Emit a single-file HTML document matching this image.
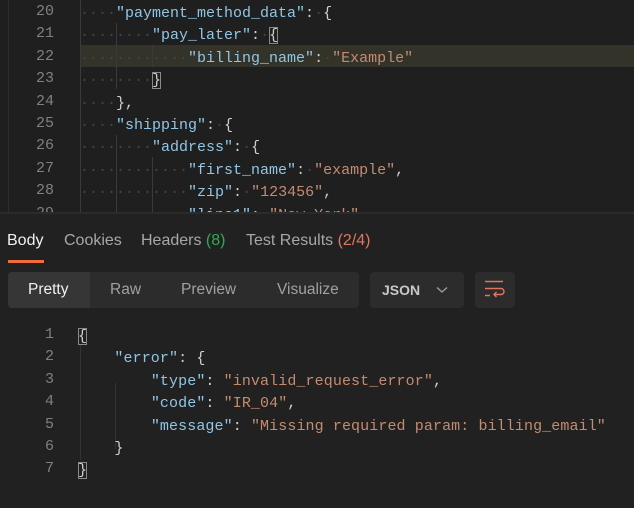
<!DOCTYPE html>
<html><head><meta charset="utf-8"><style>
*{margin:0;padding:0;box-sizing:border-box}
body{width:634px;height:508px;background:#212121;overflow:hidden;font-family:"Liberation Sans",sans-serif;position:relative}
.ln{position:absolute;left:0;width:54px;text-align:right;color:#808080;font:15px "Liberation Mono",monospace}
.cl{position:absolute;white-space:pre;font:15px "Liberation Mono",monospace;color:#d4d4d4}
.d{color:#444}
.k{color:#8fc6e6}
.s{color:#c58b70}
.p{color:#cfcfcf}
.b{outline:1px solid #8a8a8a;outline-offset:-1px}
.vl{position:absolute;width:1px;background:#3a3a3a}
.t{position:absolute;top:232px;font-size:16px;color:#a8a8a8;white-space:nowrap}
</style></head><body>
<div style="position:absolute;left:0;top:0;width:634px;height:214px;background:#1f1f1f"></div>
<div style="position:absolute;left:8px;top:0;width:1px;height:213px;background:#2e2e2e"></div>
<div style="position:absolute;left:80px;top:45px;width:554px;height:22px;background:#33332a"></div>
<div class="vl" style="left:80px;top:0;height:213px"></div>
<div class="vl" style="left:116px;top:23px;height:66px"></div>
<div class="vl" style="left:116px;top:135px;height:78px"></div>
<div class="vl" style="left:152px;top:45px;height:22px"></div>
<div class="vl" style="left:152px;top:157px;height:56px"></div>

<div style="position:absolute;top:3px;left:0">
<div class="ln" style="top:0">20</div>
<div class="ln" style="top:22.4px">21</div>
<div class="ln" style="top:44.8px">22</div>
<div class="ln" style="top:67.2px">23</div>
<div class="ln" style="top:89.6px">24</div>
<div class="ln" style="top:112px">25</div>
<div class="ln" style="top:134.4px">26</div>
<div class="ln" style="top:156.8px">27</div>
<div class="ln" style="top:179.2px">28</div>
<div class="ln" style="top:201.6px">29</div>
</div>
<div class="cl" style="left:80px;top:3px;line-height:22.4px"><span class="d">····</span><span class="k">"payment_method_data"</span><span class="p">:</span><span class="d">·</span><span class="p">{</span>
<span class="d">········</span><span class="k">"pay_later"</span><span class="p">:</span><span class="d">·</span><span class="p b">{</span>
<span class="d">············</span><span class="k">"billing_name"</span><span class="p">:</span><span class="d">·</span><span class="s">"Example"</span>
<span class="d">········</span><span class="p b">}</span>
<span class="d">····</span><span class="p">},</span>
<span class="d">····</span><span class="k">"shipping"</span><span class="p">:</span><span class="d">·</span><span class="p">{</span>
<span class="d">········</span><span class="k">"address"</span><span class="p">:</span><span class="d">·</span><span class="p">{</span>
<span class="d">············</span><span class="k">"first_name"</span><span class="p">:</span><span class="d">·</span><span class="s">"example"</span><span class="p">,</span>
<span class="d">············</span><span class="k">"zip"</span><span class="p">:</span><span class="d">·</span><span class="s">"123456"</span><span class="p">,</span>
<span class="d">············</span><span class="k">"line1"</span><span class="p">:</span><span class="d">·</span><span class="s">"New York"</span></div>
<div style="position:absolute;left:0;top:213px;width:634px;height:295px;background:#212121"></div>
<div style="position:absolute;left:0;top:212px;width:634px;height:2px;background:#2b2b2b"></div>

<div class="t" style="left:7px;color:#f0f0f0">Body</div>
<div class="t" style="left:64px">Cookies</div>
<div class="t" style="left:141px">Headers <span style="color:#33a853">(8)</span></div>
<div class="t" style="left:246px">Test Results <span style="color:#e0765f">(2/4)</span></div>
<div style="position:absolute;left:8px;top:260px;width:36px;height:3px;background:#f26b3a"></div>

<div style="position:absolute;left:8px;top:272px;width:351px;height:36px;background:#2c2c2c;border-radius:4px"></div>
<div style="position:absolute;left:8px;top:272px;width:82px;height:36px;background:#363636;border-radius:4px 0 0 4px"></div>
<div style="position:absolute;top:281px;font-size:15.5px;color:#f0f0f0;left:28px">Pretty</div>
<div style="position:absolute;top:281px;font-size:15.5px;color:#a0a0a0;left:110px">Raw</div>
<div style="position:absolute;top:281px;font-size:15.5px;color:#a0a0a0;left:181px">Preview</div>
<div style="position:absolute;top:281px;font-size:15.5px;color:#a0a0a0;left:277px">Visualize</div>
<div style="position:absolute;left:370px;top:272px;width:94px;height:36px;background:#2c2c2c;border-radius:4px"></div>
<div style="position:absolute;top:282px;left:382px;font-size:14px;font-weight:bold;color:#c8c8c8">JSON</div>
<svg style="position:absolute;left:436px;top:286px" width="12" height="8" viewBox="0 0 12 8"><path d="M1 1.5 L6 6 L11 1.5" fill="none" stroke="#a0a0a0" stroke-width="1.3"/></svg>
<div style="position:absolute;left:475px;top:272px;width:40px;height:36px;background:#2c2c2c;border-radius:4px"></div>
<svg style="position:absolute;left:484px;top:279px" width="22" height="22" viewBox="0 0 22 22"><path d="M1 2.5H19M1 9.5H17a3 3 0 0 1 0 6H10M12.5 13l-2.5 2.5 2.5 2.5M1 16.5H6" fill="none" stroke="#e0765f" stroke-width="1.4"/></svg>

<div style="position:absolute;top:326px;left:0">
<div class="ln" style="top:0">1</div>
<div class="ln" style="top:22.4px">2</div>
<div class="ln" style="top:44.8px">3</div>
<div class="ln" style="top:67.2px">4</div>
<div class="ln" style="top:89.6px">5</div>
<div class="ln" style="top:112px">6</div>
<div class="ln" style="top:134.4px">7</div>
</div>
<div class="vl" style="left:80px;top:345px;height:115px;background:#333"></div>
<div class="vl" style="left:115px;top:383px;height:66px;background:#333"></div>
<div class="cl" style="left:78px;top:326px;line-height:22.4px;letter-spacing:0.1px"><span class="p b">{</span>
    <span class="k">"error"</span><span class="p">: {</span>
        <span class="k">"type"</span><span class="p">: </span><span class="s">"invalid_request_error"</span><span class="p">,</span>
        <span class="k">"code"</span><span class="p">: </span><span class="s">"IR_04"</span><span class="p">,</span>
        <span class="k">"message"</span><span class="p">: </span><span class="s">"Missing required param: billing_email"</span>
    <span class="p">}</span>
<span class="p b">}</span></div>
</body></html>
